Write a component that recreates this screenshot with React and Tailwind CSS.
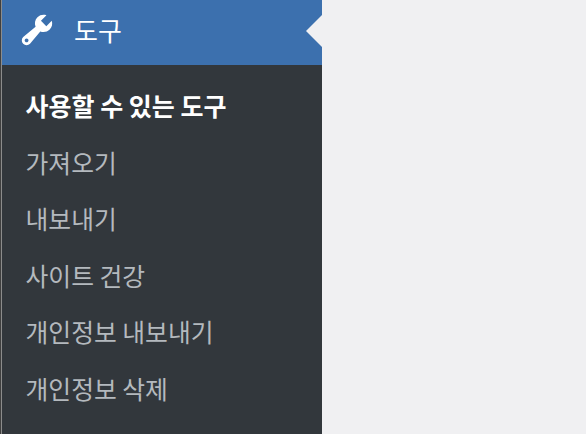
const items = ["가져오기", "내보내기", "사이트 건강", "개인정보 내보내기", "개인정보 삭제"];

function WrenchIcon() {
  return (
    <svg viewBox="0 0 20 20" className="w-[38px] h-[38px] shrink-0 text-white" fill="currentColor">
      <path fillRule="evenodd" d="M16.68 9.77c-1.34 1.34-3.3 1.67-4.95.99l-5.41 6.52c-.99.99-2.59.99-3.58 0s-.99-2.59 0-3.57l6.52-5.42c-.68-1.65-.35-3.61.99-4.95 1.28-1.28 3.12-1.62 4.72-1.06l-2.89 2.89 2.82 2.82 2.86-2.87c.53 1.58.18 3.39-1.08 4.65zM3.81 16.21c.4.39 1.04.39 1.43 0 .4-.4.4-1.04 0-1.43-.39-.4-1.03-.4-1.43 0-.39.39-.39 1.03 0 1.43z" />
    </svg>
  );
}

export default function App() {
  return (
    <div className="flex h-[434px] w-[586px] overflow-hidden bg-[#f0f0f2] font-['Noto_Sans_CJK_KR','Liberation_Sans',sans-serif]">
      <aside className="h-full w-[322px] border-l border-[#3f3f3f]">
        <div className="flex h-full flex-col border-l border-[#8c8c8c] bg-[#32373c]">
          <div className="relative flex h-[65px] items-center bg-[#3c70ae] pl-[16px] pb-[5px] text-white">
            <WrenchIcon />
            <span className="ml-[18px] text-[26px] leading-none">도구</span>
            <div className="absolute right-0 top-[15px] h-0 w-0 border-y-[16px] border-r-[16px] border-y-transparent border-r-[#f0f0f2]" />
          </div>
          <ul className="flex flex-col pt-[12px] pl-[23.5px] text-[24.8px]">
            <li className="flex h-[57px] items-center text-[25px] font-bold text-white">사용할 수 있는 도구</li>
            {items.map((item) => (
              <li key={item} className="flex h-[56.5px] items-center text-[#b4b9be]">{item}</li>
            ))}
          </ul>
        </div>
      </aside>
    </div>
  );
}
